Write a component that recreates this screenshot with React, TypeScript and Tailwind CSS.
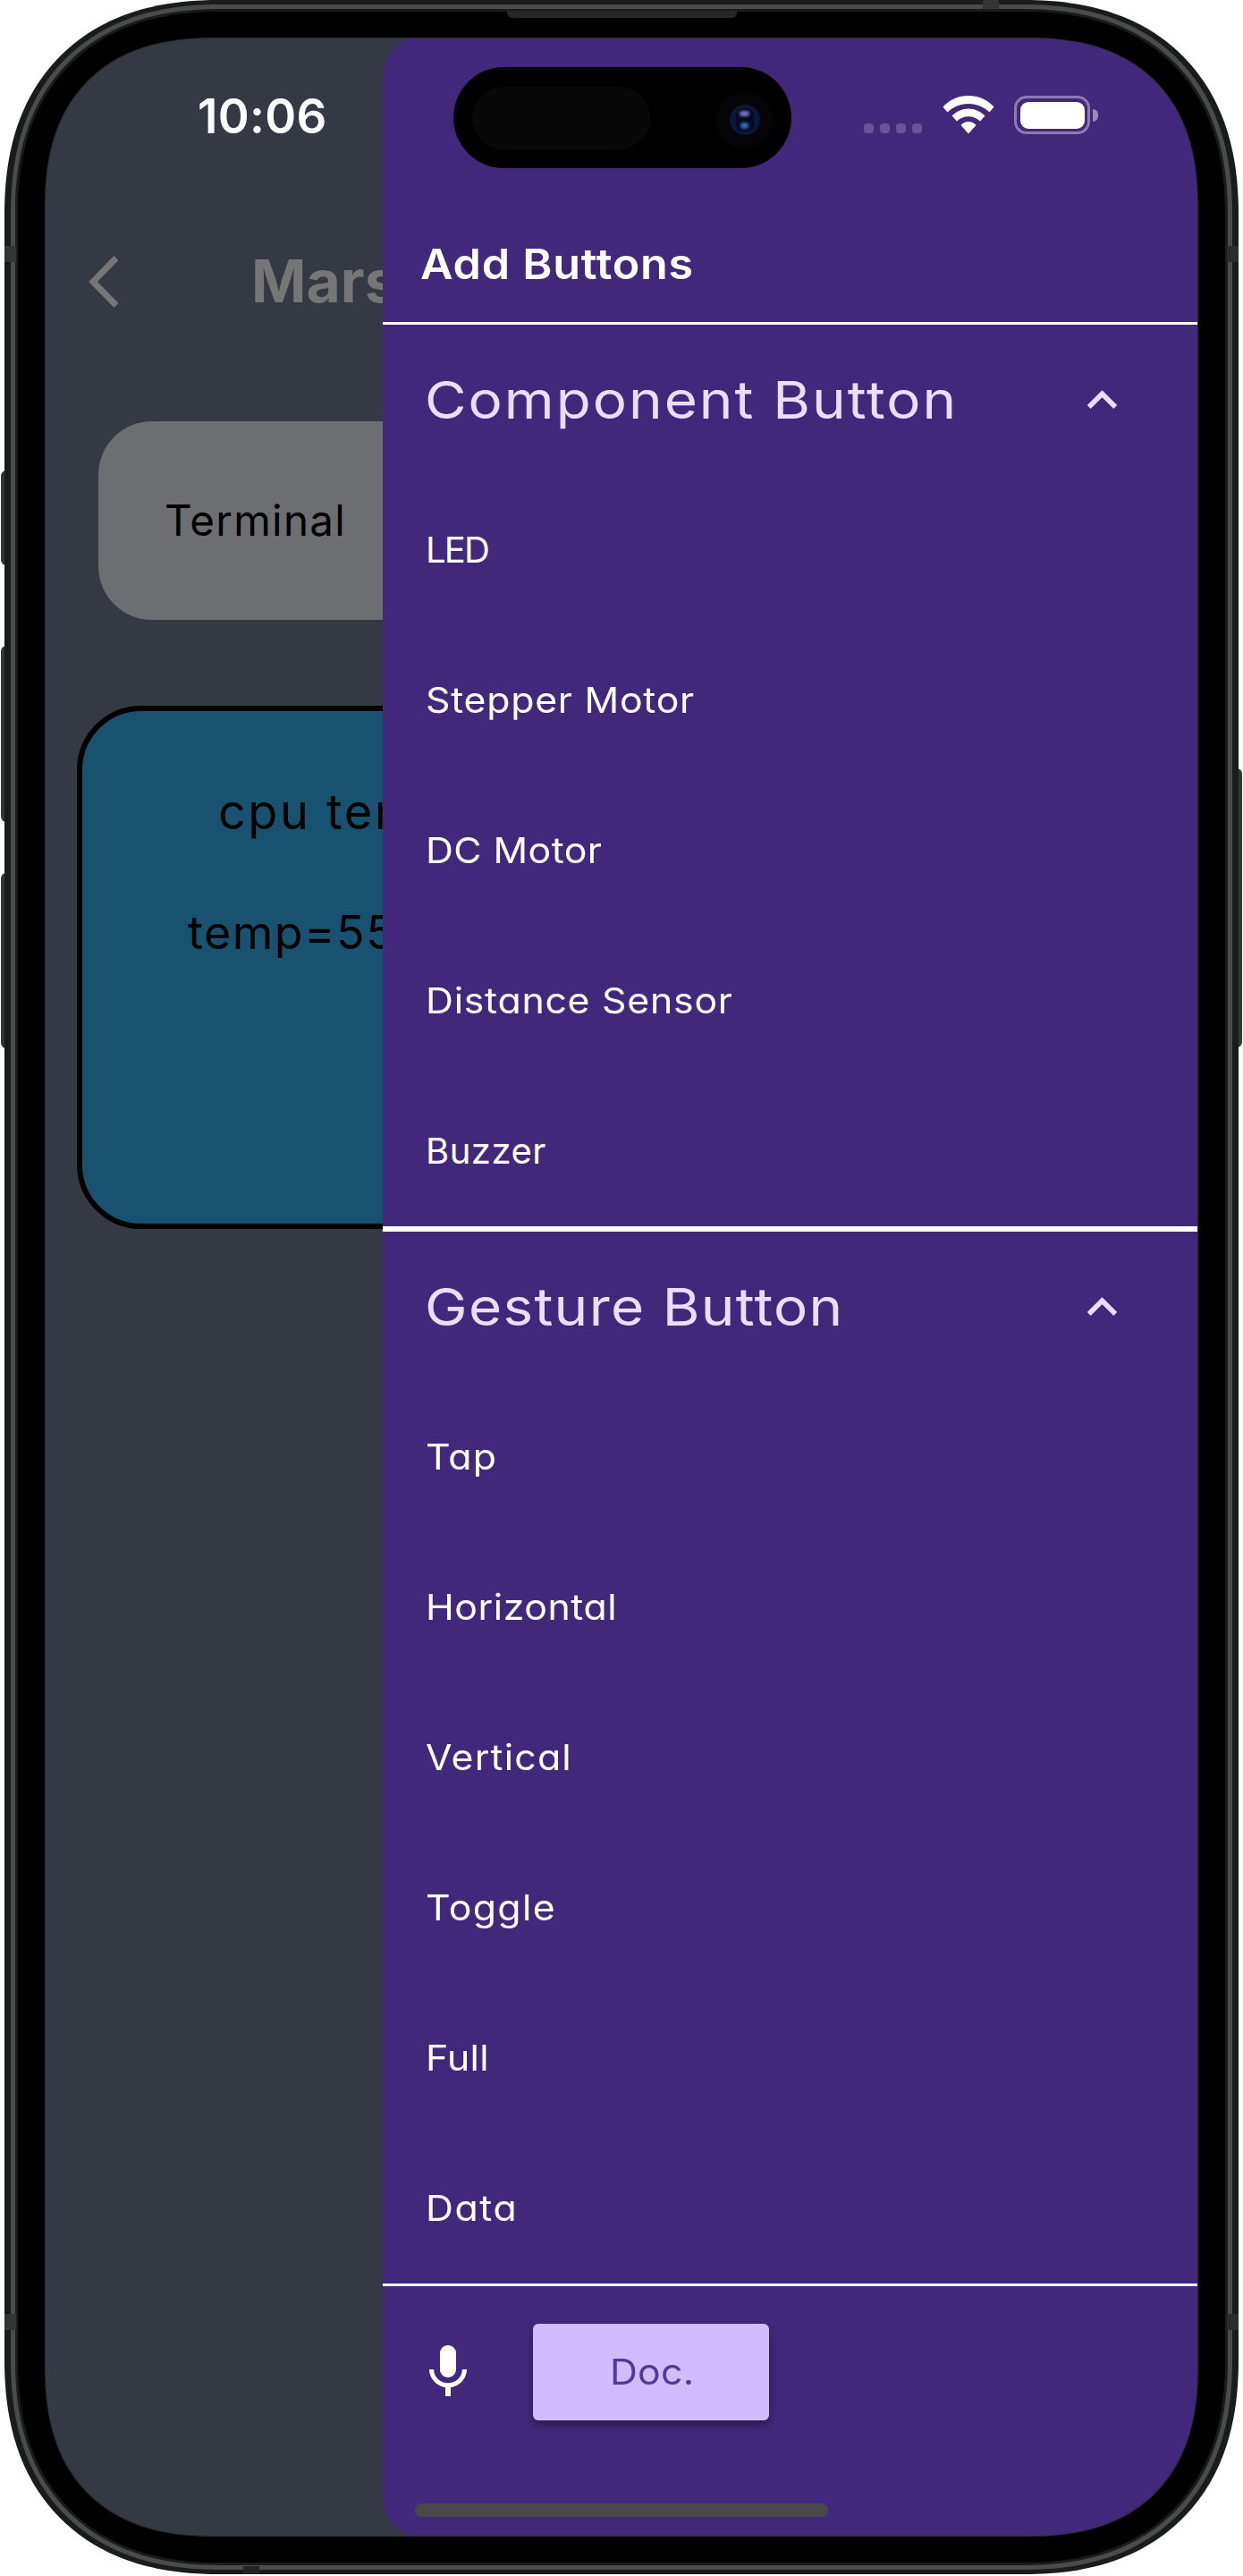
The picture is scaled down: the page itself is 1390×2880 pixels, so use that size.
import React from "react";

const componentItems = [
  { label: "LED", style: "tracking-[-1.800px]" },
  { label: "Stepper Motor", style: "scale-x-[1.07] tracking-[0.700px]" },
  { label: "DC Motor", style: "scale-x-[1.07] tracking-[0.400px]" },
  { label: "Distance Sensor", style: "scale-x-[1.07] tracking-[0.700px]" },
  { label: "Buzzer", style: "tracking-[0.500px]" },
];

const gestureItems = [
  { label: "Tap", style: "scale-x-[1.07] tracking-[1px]" },
  { label: "Horizontal", style: "scale-x-[1.07] tracking-[0.500px]" },
  { label: "Vertical", style: "scale-x-[1.07] tracking-[1.100px]" },
  { label: "Toggle", style: "scale-x-[1.07] tracking-[1.300px]" },
  { label: "Full", style: "scale-x-[1.07] tracking-[0.200px]" },
  { label: "Data", style: "scale-x-[1.07] tracking-[1.500px]" },
];

function SectionHeader({ title, tracking }: { title: string; tracking: string }) {
  return (
    <div className="flex h-[168px] items-center justify-between pl-[47px] pr-[73px] text-[#ebddff]">
      <span
        className={
          "origin-left scale-x-[1.1] whitespace-nowrap text-[58px] font-normal leading-none " + tracking
        }
      >
        {title}
      </span>
      <svg className="size-[67px] shrink-0" viewBox="0 0 24 24" fill="currentColor">
        <path d="M12 8l-6 6 1.41 1.41L12 10.83l4.59 4.58L18 14z" />
      </svg>
    </div>
  );
}

function Item({ label, style }: { label: string; style: string }) {
  return (
    <div className="flex h-[168px] items-center pl-[48px] text-[40px] leading-none text-white">
      <span className={"origin-left whitespace-nowrap " + style}>{label}</span>
    </div>
  );
}

function StatusBar() {
  return (
    <div className="absolute inset-x-0 top-0 h-[160px]">
      <div className="absolute left-[170px] top-[61px] text-[53px] font-semibold leading-none tracking-[0.300px] text-white">
        10:06
      </div>
      <div className="absolute left-[456px] top-[32px] flex h-[113px] w-[378px] items-center justify-between rounded-full bg-black pl-[21px] pr-[21px]">
        <div className="h-[70px] w-[199px] rounded-full bg-[#080808]" />
        <div className="mt-[5px] flex size-[63px] items-center justify-center rounded-full bg-[#060408]">
          <div className="flex size-[34px] items-center justify-center rounded-full bg-[#0b1838]">
            <div className="flex h-[26px] w-[20px] flex-col items-center justify-between rounded-[8px] bg-[#060720] py-[3px]">
              <div className="h-[6px] w-[11px] rounded-full bg-[#7474c8] blur-[1.500px]" />
              <div className="h-[7px] w-[9px] rounded-full bg-[#2670b0] blur-[1.500px]" />
            </div>
          </div>
        </div>
      </div>
      <div className="absolute left-[915px] top-[64px] flex h-[43px] items-end">
        <div className="mb-px flex gap-[7px]">
          {[0, 1, 2, 3].map((i) => (
            <div key={i} className="size-[11px] rounded-[4px] bg-[#6c5397]" />
          ))}
        </div>
        <svg className="ml-[22.500px] h-[43px] w-[58px]" viewBox="0 0 58 43" fill="#fff">
          <path d="M29 0C40 0 50.500 4.500 57.500 12.500L52.500 18.500C46.500 12.700 38 9 29 9S11.500 12.700 5.500 18.500L0.500 12.500C7.500 4.500 18 0 29 0Z" />
          <path d="M29 14.500C36 14.500 42.500 17.500 47.500 22.500L42 28.500C38.500 25.300 34 23.300 29 23.300S19.500 25.300 16 28.500L10.500 22.500C15.500 17.500 22 14.500 29 14.500Z" />
          <path d="M29 29C32.200 29 35.200 30.300 37.500 33L29 42.500L20.500 33C22.800 30.300 25.800 29 29 29Z" />
        </svg>
        <div className="ml-[22.500px] h-[43px] w-[85px] rounded-[14px] border-[3.500px] border-[#8f7bb0] p-[3.500px]">
          <div className="size-full rounded-[9px] bg-white" />
        </div>
        <div className="mb-[14px] ml-[3px] h-[14px] w-[6px] rounded-r-full bg-[#9c8bba]" />
      </div>
    </div>
  );
}

function ControlScreen() {
  return (
    <div className="flex h-full w-full flex-col pt-[233px]">
      <div className="flex h-[76px] items-center">
        <svg className="ml-[47px] mt-[2px] h-[58px] w-[35px]" viewBox="0 0 35 58" fill="none" stroke="#767676" strokeWidth="7">
          <path d="M32 2.500L6 29L32 55.500" />
        </svg>
        <div className="ml-[148px] text-[66px] font-bold leading-none text-[#767676]">Mars</div>
      </div>
      <div className="ml-[59px] mt-[119px] flex h-[222px] w-[1170px] items-center rounded-[60px] bg-[#6d6e72] pl-[74px]">
        <span className="text-[47.500px] leading-none tracking-[1.300px] text-black">Terminal</span>
      </div>
      <div className="ml-[35px] mt-[96px] flex h-[585px] w-[1218px] flex-col rounded-[72px] border-[6px] border-black bg-[#195271] text-black">
        <span className="ml-[152px] mt-[81px] text-[54px] leading-[64px] tracking-[2.500px]">cpu temp</span>
        <span className="ml-[118px] mt-[71px] text-[52px] leading-[64px] tracking-[1.500px]">temp=55</span>
      </div>
    </div>
  );
}

function Drawer() {
  return (
    <div className="absolute -top-[2px] bottom-[-2px] left-[377px] right-0 flex flex-col rounded-l-[44px] bg-[#42287a] pt-[182px] [font-feature-settings:'cv11']">
      <div className="flex h-[140px] items-center border-b-[3px] border-white pl-[42px] pt-[6px] text-[47px] font-semibold leading-none text-white">
        <span className="origin-left scale-x-[1.07] whitespace-nowrap tracking-[0.700px]">Add Buttons</span>
      </div>
      <div className="border-b-[6px] border-white">
        <SectionHeader title="Component Button" tracking="tracking-[1.800px]" />
        {componentItems.map((item) => (
          <Item key={item.label} {...item} />
        ))}
      </div>
      <div className="border-b-[3px] border-white">
        <SectionHeader title="Gesture Button" tracking="tracking-[1.200px]" />
        {gestureItems.map((item) => (
          <Item key={item.label} {...item} />
        ))}
      </div>
      <div className="flex items-center pl-[37px] pt-[42px]">
        <svg className="size-[72px]" viewBox="0 0 24 24" fill="#fff">
          <path d="M12 14c1.660 0 2.990-1.340 2.990-3L15 5c0-1.660-1.340-3-3-3S9 3.340 9 5v6c0 1.660 1.340 3 3 3zm5.300-3c0 3-2.540 5.100-5.300 5.100S6.700 14 6.700 11H5c0 3.410 2.720 6.230 6 6.720V21h2v-3.280c3.280-.48 6-3.300 6-6.720h-1.700z" />
        </svg>
        <div className="ml-[59px] flex h-[108px] w-[264px] items-center justify-center rounded-[6px] bg-[#d1bcff] pl-[2px] text-[40px] leading-none text-[#523a96] shadow-[0_5px_9px_rgba(0,0,0,0.35)]">
          <span className="scale-x-[1.07] tracking-[0.300px]">Doc.</span>
        </div>
      </div>
      <div className="ml-[36px] mt-[93px] h-[15px] w-[462px] rounded-full bg-[#494949]" />
    </div>
  );
}

export default function App() {
  return (
    <div className="relative h-[2880px] w-[1390px] overflow-hidden bg-white pl-[5px] font-['Inter',sans-serif]">
      <div className="absolute left-[1px] top-[526px] h-[106px] w-[8px] rounded-l-[6px] bg-[#343635]" />
      <div className="absolute left-[1px] top-[722px] h-[197px] w-[8px] rounded-l-[6px] bg-[#343635]" />
      <div className="absolute left-[1px] top-[976px] h-[196px] w-[8px] rounded-l-[6px] bg-[#343635]" />
      <div className="absolute left-[1381px] top-[859px] h-[312px] w-[8px] rounded-r-[6px] bg-[#343635]" />

      <div className="relative h-[2878px] w-[1380px] overflow-hidden rounded-[240px] bg-[#1a1c1b] px-[7px] py-[5px] [corner-shape:superellipse(1.2)]">
        <div className="h-full rounded-[234px] bg-[#4a4b4d] p-[5px] [corner-shape:superellipse(1.2)]">
          <div className="h-full rounded-[229px] bg-[#1b1b1c] p-[3px] [corner-shape:superellipse(1.2)]">
            <div className="h-full rounded-[226px] bg-black px-[31px] py-[30px] [corner-shape:superellipse(1.2)]">
              <div className="relative h-full overflow-hidden rounded-[190px] bg-[#353944] shadow-[0_0_0_1px_#2c2c2e] [corner-shape:superellipse(1.25)]">
                <ControlScreen />
                <Drawer />
                <StatusBar />
              </div>
            </div>
          </div>
        </div>
        <div className="absolute left-[562px] top-[12px] h-[8px] w-[257px] rounded-b-[6px] bg-[#272727]" />
        <div className="absolute left-0 top-[275px] h-[18px] w-[13px] bg-[#333534]" />
        <div className="absolute left-0 top-[2587px] h-[18px] w-[13px] bg-[#333534]" />
        <div className="absolute right-0 top-[275px] h-[18px] w-[13px] bg-[#2b2c2c]" />
        <div className="absolute right-0 top-[2587px] h-[18px] w-[13px] bg-[#2b2c2c]" />
        <div className="absolute left-[1094px] top-0 h-[10px] w-[18px] bg-[#333534]" />
        <div className="absolute bottom-0 left-[267px] h-[9px] w-[18px] bg-[#222423]" />
      </div>
    </div>
  );
}
